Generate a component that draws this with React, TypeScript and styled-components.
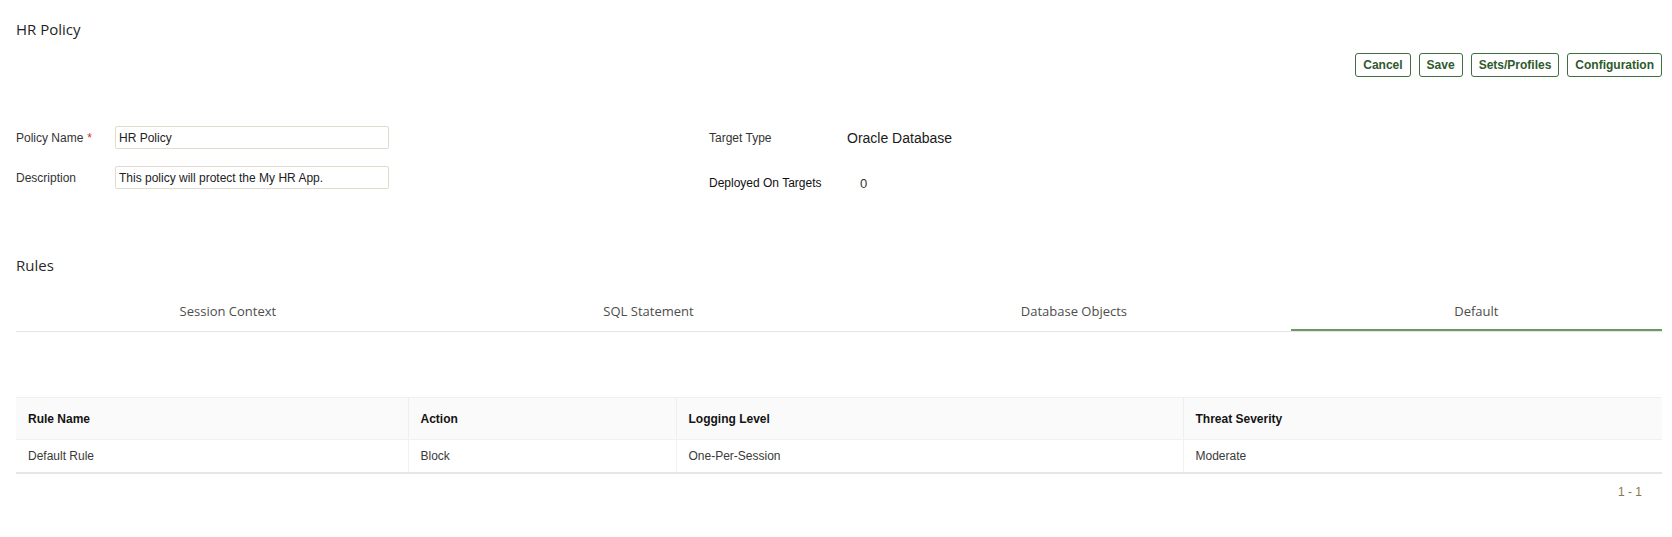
import React from "react";
import styled, { createGlobalStyle, css } from "styled-components";

const GlobalStyle = createGlobalStyle`
  html, body { margin: 0; padding: 0; background: #ffffff; }
  body { font-family: "Liberation Sans", Arial, sans-serif; color: #333; }
  * { box-sizing: border-box; }
`;

const Page = styled.div`
  padding: 0 10px 0 16px;
  width: 1672px;
`;

const Title = styled.h1`
  margin: 0;
  padding-top: 19px;
  font-family: "Open Sans", "Noto Sans", sans-serif;
  font-weight: 400;
  font-size: 15px;
  line-height: 20px;
  color: #1f1f1f;
`;

const Toolbar = styled.div`
  display: flex;
  justify-content: flex-end;
  gap: 8px;
  margin-top: 14px;
`;

const Button = styled.button`
  height: 24px;
  padding: 0 7px;
  border: 1px solid #3f6f3c;
  border-radius: 3px;
  background: #ffffff;
  color: #2e5a2c;
  font-family: "Liberation Sans", Arial, sans-serif;
  font-weight: 700;
  font-size: 12px;
  line-height: 22px;
  cursor: pointer;
`;

const FormArea = styled.div`
  display: flex;
  align-items: flex-start;
  margin-top: 49px;
`;

const LeftFields = styled.div`
  width: 693px;
  display: grid;
  grid-template-columns: 99px 274px;
  grid-auto-rows: 23px;
  row-gap: 17px;
  align-items: center;
`;

const RightFields = styled.div`
  display: grid;
  grid-template-columns: 138px auto;
  grid-auto-rows: 24px;
  row-gap: 21px;
  align-items: center;
`;

const Label = styled.label<{ $dark?: boolean }>`
  font-size: 12px;
  color: ${(p) => (p.$dark ? "#111" : "#333")};
  white-space: nowrap;
`;

const Required = styled.span`
  color: #d22c2c;
  margin-left: 4px;
`;

const Input = styled.input`
  height: 23px;
  width: 274px;
  border: 1px solid #e0dccd;
  border-radius: 2px;
  padding: 0 3px;
  font-family: "Liberation Sans", Arial, sans-serif;
  font-size: 12px;
  color: #222;
  outline: none;
`;

const Value = styled.span<{ $large?: boolean; $indent?: number }>`
  color: #1a1a1a;
  padding-left: ${(p) => p.$indent ?? 0}px;
  ${(p) =>
    p.$large
      ? css`
          font-size: 14px;
        `
      : css`
          font-size: 13px;
          color: #333;
        `}
`;

const SectionTitle = styled.h2`
  margin: 60px 0 0;
  font-family: "Open Sans", "Noto Sans", sans-serif;
  font-weight: 400;
  font-size: 15px;
  line-height: 20px;
  color: #2a2a2a;
`;

const TabList = styled.div`
  display: flex;
  margin-top: 16px;
  border-bottom: 1px solid #e6e6e6;
`;

const Tab = styled.div<{ $active?: boolean }>`
  flex: 1 1 auto;
  height: 40px;
  display: flex;
  align-items: center;
  justify-content: center;
  font-family: "Open Sans", "Noto Sans", sans-serif;
  font-size: 13px;
  color: #4d4d4d;
  cursor: pointer;
  ${(p) =>
    p.$active &&
    css`
      box-shadow: inset 0 -2px 0 #6a9962;
    `}
`;

const Table = styled.table`
  margin-top: 65px;
  width: 100%;
  border-collapse: collapse;
  table-layout: fixed;
  font-size: 12px;
`;

const Th = styled.th`
  height: 42px;
  padding: 0 12px;
  text-align: left;
  font-weight: 700;
  color: #141414;
  background: #fafafa;
  border-top: 1px solid #f0f0f0;
  border-bottom: 1px solid #f1f1f1;
  & + & {
    border-left: 1px solid #efefef;
  }
`;

const Td = styled.td`
  height: 33px;
  padding: 0 12px;
  color: #3a3a3a;
  border-bottom: 2px solid #e6e6e6;
  & + & {
    border-left: 1px solid #f2f2f2;
  }
`;

const Pagination = styled.div`
  display: flex;
  justify-content: flex-end;
  padding: 11px 20px 0 0;
  font-size: 12px;
  line-height: 14px;
  color: #86784a;
`;

const columns = [
  { name: "Rule Name", width: 392 },
  { name: "Action", width: 268 },
  { name: "Logging Level", width: 507 },
  { name: "Threat Severity", width: 479 },
];

const rows = [["Default Rule", "Block", "One-Per-Session", "Moderate"]];

const tabs = ["Session Context", "SQL Statement", "Database Objects", "Default"];

export default function App() {
  return (
    <>
      <GlobalStyle />
      <Page>
        <Title>HR Policy</Title>
        <Toolbar>
          <Button>Cancel</Button>
          <Button>Save</Button>
          <Button>Sets/Profiles</Button>
          <Button>Configuration</Button>
        </Toolbar>

        <FormArea>
          <LeftFields>
            <Label>
              Policy Name<Required>*</Required>
            </Label>
            <Input defaultValue="HR Policy" />
            <Label>Description</Label>
            <Input defaultValue="This policy will protect the My HR App." />
          </LeftFields>
          <RightFields>
            <Label>Target Type</Label>
            <Value $large>Oracle Database</Value>
            <Label $dark>Deployed On Targets</Label>
            <Value $indent={13}>0</Value>
          </RightFields>
        </FormArea>

        <SectionTitle>Rules</SectionTitle>
        <TabList>
          {tabs.map((t) => (
            <Tab key={t} $active={t === "Default"}>
              {t}
            </Tab>
          ))}
        </TabList>

        <Table>
          <colgroup>
            {columns.map((c) => (
              <col key={c.name} style={{ width: c.width }} />
            ))}
          </colgroup>
          <thead>
            <tr>
              {columns.map((c) => (
                <Th key={c.name}>{c.name}</Th>
              ))}
            </tr>
          </thead>
          <tbody>
            {rows.map((r, i) => (
              <tr key={i}>
                {r.map((cell, j) => (
                  <Td key={j}>{cell}</Td>
                ))}
              </tr>
            ))}
          </tbody>
        </Table>
        <Pagination>1 - 1</Pagination>
      </Page>
    </>
  );
}
